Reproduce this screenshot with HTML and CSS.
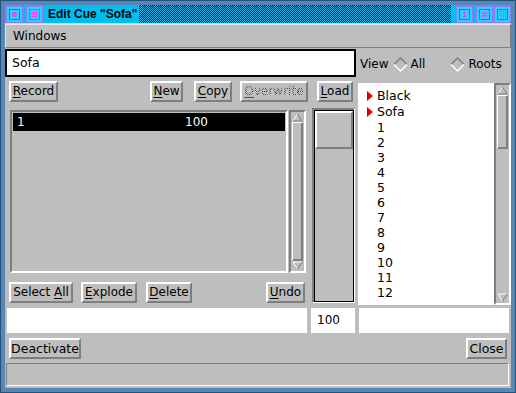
FILE: index.html
```html
<!DOCTYPE html>
<html lang="en">
<head>
  <meta charset="UTF-8">
  <title>Edit Cue "Sofa"</title>
  <link rel="stylesheet" href="styles.css">
</head>
<body>
  <div class="window">
    <div class="titlebar">
      <span class="tbtn">
        <svg width="17" height="17" viewBox="0 0 17 17">
          <rect x="0" y="0" width="17" height="17" fill="#8c7cff"/>
          <rect x="1" y="1" width="15" height="15" fill="#2cd2ff"/>
          <rect x="3.5" y="3.5" width="10" height="10" fill="#2cd2ff" stroke="#6a4cf0"/>
          <rect x="6" y="7" width="5" height="3" fill="#ff3cf0"/>
          <rect x="7" y="6" width="3" height="5" fill="#ff3cf0"/>
        </svg>
      </span>
      <span class="tbtn">
        <svg width="17" height="17" viewBox="0 0 17 17">
          <rect x="0" y="0" width="17" height="17" fill="#8c7cff"/>
          <rect x="1" y="1" width="15" height="15" fill="#2cd2ff"/>
          <rect x="3.5" y="3.5" width="10" height="10" fill="#2cd2ff" stroke="#b04cf0"/>
          <path d="M5 6.5h7M5 8.5h7M5 10.5h7" stroke="#ff3cf0" stroke-width="1"/>
        </svg>
      </span>
      <span class="title">Edit Cue "Sofa"</span>
      <span class="stipple"></span>
      <span class="tbtn">
        <svg width="17" height="17" viewBox="0 0 17 17">
          <rect x="0" y="0" width="17" height="17" fill="#8c7cff"/>
          <rect x="1" y="1" width="15" height="15" fill="#2cd2ff"/>
          <rect x="3.5" y="3.5" width="10" height="10" fill="#2cd2ff" stroke="#6a4cf0"/>
          <path d="M8.5 5l-2 2h4zM8.5 12l-2-2h4zM8 7h1v3h-1z" fill="#ff3cf0"/>
        </svg>
      </span>
      <span class="tbtn gap3">
        <svg width="17" height="17" viewBox="0 0 17 17">
          <rect x="0" y="0" width="17" height="17" fill="#8c7cff"/>
          <rect x="1" y="1" width="15" height="15" fill="#2cd2ff"/>
          <rect x="3.5" y="3.5" width="10" height="10" fill="#2cd2ff" stroke="#6a4cf0"/>
          <path d="M6 6h2v2h-2zM9 6h2v2h-2zM7.5 7.5h2v2h-2zM6 9h2v2h-2zM9 9h2v2h-2z" fill="#ff3cf0"/>
        </svg>
      </span>
      <span class="tbtn gap2">
        <svg width="17" height="17" viewBox="0 0 17 17">
          <rect x="0" y="0" width="17" height="17" fill="#8c7cff"/>
          <rect x="1" y="1" width="15" height="15" fill="#2cd2ff"/>
          <rect x="3.5" y="3.5" width="10" height="10" fill="#2cd2ff" stroke="#6a4cf0"/>
          <path d="M5 5.5h6.5v6.5M5 7.5h4.5v4.5M5 9.5h2.5v2.5" fill="none" stroke="#ff3cf0" stroke-width="1"/>
        </svg>
      </span>
    </div>

    <div class="client">
      <div class="menubar"><span class="menu">Windows</span></div>

      <div class="row-name">
        <div class="entry">Sofa</div>
        <span class="view-label">View</span>
        <span class="radio">
          <svg width="15" height="15" viewBox="0 0 15 15">
            <path d="M1 7.5L7.5 1L14 7.5" fill="none" stroke="#7e7e7e" stroke-width="1.5"/>
            <path d="M14 7.5L7.5 14L1 7.5" fill="none" stroke="#fff" stroke-width="1.5"/>
          </svg>
          All
        </span>
        <span class="radio roots">
          <svg width="15" height="15" viewBox="0 0 15 15">
            <path d="M1 7.5L7.5 1L14 7.5" fill="none" stroke="#7e7e7e" stroke-width="1.5"/>
            <path d="M14 7.5L7.5 14L1 7.5" fill="none" stroke="#fff" stroke-width="1.5"/>
          </svg>
          Roots
        </span>
      </div>

      <div class="row-main">
        <div class="left-col">
          <div class="btnrow btnrow-top">
            <button class="btn b-record"><u>R</u>ecord</button>
            <button class="btn b-new"><u>N</u>ew</button>
            <button class="btn b-copy"><u>C</u>opy</button>
            <button class="btn b-over" disabled><span class="stippled"><u>O</u>verwrite</span></button>
            <button class="btn b-load"><u>L</u>oad</button>
          </div>
          <div class="lower">
            <div class="listblock">
              <div class="listwrap">
                <div class="list">
                  <div class="item selected"><span class="c1">1</span><span>100</span></div>
                </div>
                <div class="vscroll">
                  <svg class="arrow" width="11" height="9" viewBox="0 0 11 9">
                    <path d="M5.5 1L10 8H1z" fill="#bebebe"/>
                    <path d="M1 8L5.5 1" stroke="#fff"/>
                    <path d="M5.5 1L10 8H1" fill="none" stroke="#7e7e7e"/>
                  </svg>
                  <div class="thumb full"></div>
                  <svg class="arrow" width="11" height="9" viewBox="0 0 11 9">
                    <path d="M1 1h9L5.5 8z" fill="#bebebe"/>
                    <path d="M1 1h9M1 1l4.5 7" fill="none" stroke="#fff"/>
                    <path d="M10 1L5.5 8" stroke="#7e7e7e"/>
                  </svg>
                </div>
              </div>
              <div class="btnrow btnrow-bottom">
                <button class="btn b-selall">Select <u>A</u>ll</button>
                <button class="btn b-explode"><u>E</u>xplode</button>
                <button class="btn b-delete"><u>D</u>elete</button>
                <button class="btn b-undo"><u>U</u>ndo</button>
              </div>
            </div>
            <div class="slider"><div class="slider-thumb"></div></div>
          </div>
        </div>

        <div class="tree">
          <div class="tree-list">
            <div class="node"><span class="tri"></span>Black</div>
            <div class="node"><span class="tri"></span>Sofa</div>
            <div class="leaf">1</div>
            <div class="leaf">2</div>
            <div class="leaf">3</div>
            <div class="leaf">4</div>
            <div class="leaf">5</div>
            <div class="leaf">6</div>
            <div class="leaf">7</div>
            <div class="leaf">8</div>
            <div class="leaf">9</div>
            <div class="leaf">10</div>
            <div class="leaf">11</div>
            <div class="leaf">12</div>
          </div>
          <div class="vscroll">
            <svg class="arrow" width="11" height="9" viewBox="0 0 11 9">
              <path d="M5.5 1L10 8H1z" fill="#bebebe"/>
              <path d="M1 8L5.5 1" stroke="#fff"/>
              <path d="M5.5 1L10 8H1" fill="none" stroke="#7e7e7e"/>
            </svg>
            <div class="thumb part"></div>
            <div class="trough"></div>
            <svg class="arrow" width="11" height="9" viewBox="0 0 11 9">
              <path d="M1 1h9L5.5 8z" fill="#bebebe"/>
              <path d="M1 1h9M1 1l4.5 7" fill="none" stroke="#fff"/>
              <path d="M10 1L5.5 8" stroke="#7e7e7e"/>
            </svg>
          </div>
        </div>
      </div>

      <div class="row-fields">
        <div class="field f-left"></div>
        <div class="field f-mid">100</div>
        <div class="field f-right"></div>
      </div>

      <div class="row-actions">
        <button class="btn b-deact">Deactivate</button>
        <button class="btn b-close">Close</button>
      </div>

      <div class="status"></div>
    </div>
  </div>
</body>
</html>
```

FILE: styles.css
```css
body {
  margin: 0;
  overflow: hidden;
  font-family: "DejaVu Sans", sans-serif;
  font-size: 12px;
  color: #000;
}
.window {
  width: 516px;
  height: 393px;
  box-sizing: border-box;
  background-color: #5687b6;
  border: 1px solid #26517b;
  padding: 4px;
  display: flex;
  flex-direction: column;
}
.titlebar {
  height: 18px;
  background-color: #00bef0;
  border-bottom: 1px solid #a4e6f8;
  display: flex;
  align-items: flex-start;
}
.tbtn {
  display: block;
  width: 17px;
  height: 17px;
  margin-top: 1px;
  margin-left: 1px;
}
.tbtn + .tbtn {
  margin-left: 3px;
}
.tbtn.gap2 {
  margin-left: 1px;
}
.tbtn svg {
  display: block;
}
.title {
  font-family: "Liberation Sans", sans-serif;
  font-weight: bold;
  font-size: 12px;
  line-height: 18px;
  margin-left: 5px;
  white-space: nowrap;
}
.stipple {
  flex: 1;
  height: 18px;
  margin-left: 2px;
  margin-right: 4px;
  background: repeating-conic-gradient(#000 0 25%, #00bef0 0 50%) 0 0 / 2px 2px;
}
.client {
  flex: 1;
  background-color: #bebebe;
  display: flex;
  flex-direction: column;
}
.menubar {
  height: 24px;
  box-sizing: border-box;
  border-top: 1px solid #e8e8e8;
  border-left: 1px solid #e8e8e8;
  border-bottom: 1px solid #7e7e7e;
  border-right: 1px solid #7e7e7e;
  display: flex;
  align-items: center;
}
.menu {
  margin-left: 7px;
}
.row-name {
  margin-top: 1px;
  height: 28px;
  display: flex;
  align-items: center;
}
.entry {
  width: 351px;
  height: 28px;
  box-sizing: border-box;
  border: 2px solid #000;
  background: #fff;
  padding-left: 5px;
  line-height: 24px;
  font-size: 12.5px;
}
.view-label {
  margin-left: 4px;
  margin-top: 2px;
}
.radio {
  display: flex;
  align-items: center;
  gap: 2px;
  margin-left: 5px;
  margin-top: 2px;
}
.radio svg {
  display: block;
}
.radio.roots {
  margin-left: 25px;
  gap: 3px;
}
.row-main {
  margin-top: 3px;
  height: 226px;
  display: flex;
}
.left-col {
  width: 353px;
}
.btnrow {
  height: 21px;
  display: flex;
}
.btnrow-top {
  margin-top: 1px;
  padding-left: 4px;
}
.btn {
  font-family: inherit;
  font-size: 12px;
  color: #000;
  height: 21px;
  box-sizing: border-box;
  padding: 0;
  line-height: 17px;
  text-align: center;
  background-color: #bebebe;
  border: 2px solid;
  border-color: #fff #7e7e7e #7e7e7e #fff;
  white-space: nowrap;
}
.btn u {
  text-underline-offset: 2px;
}
.b-record { width: 49px; }
.b-new { width: 33px; margin-left: 92px; }
.b-copy { width: 38px; margin-left: 11px; }
.b-over { width: 68px; margin-left: 8px; }
.b-load { width: 36px; margin-left: 9px; }
.stippled {
  color: transparent;
  background: repeating-conic-gradient(#333 0 25%, transparent 0 50%) 0 0 / 2px 2px;
  -webkit-background-clip: text;
  background-clip: text;
}
.stippled u {
  text-decoration-color: #555;
}
.lower {
  margin-top: 6px;
  height: 196px;
  display: flex;
}
.listblock {
  width: 298px;
  margin-left: 4px;
  display: flex;
  flex-direction: column;
}
.listwrap {
  margin-top: 2px;
  height: 163px;
  display: flex;
}
.list {
  width: 278px;
  margin-left: 1px;
  box-sizing: border-box;
  border: 2px solid;
  border-color: #7e7e7e #fff #fff #7e7e7e;
  padding: 1px;
}
.item {
  height: 18px;
  line-height: 18px;
  padding-left: 4px;
  display: flex;
}
.item.selected {
  background: #000;
  color: #fff;
}
.c1 {
  width: 168px;
}
.vscroll {
  width: 17px;
  margin-left: 1px;
  box-sizing: border-box;
  border: 2px solid;
  border-color: #7e7e7e #fff #fff #7e7e7e;
  padding: 1px 0;
  display: flex;
  flex-direction: column;
  align-items: center;
}
.arrow {
  display: block;
  flex: none;
}
.thumb {
  width: 11px;
  box-sizing: border-box;
  border: 1px solid;
  border-color: #fff #7e7e7e #7e7e7e #fff;
  box-shadow: inset -1px -1px 0 #7e7e7e;
}
.thumb.full {
  flex: 1;
}
.thumb.part {
  height: 54px;
  flex: none;
}
.trough {
  flex: 1;
}
.btnrow-bottom {
  margin-top: 9px;
}
.b-selall { width: 64px; }
.b-explode { width: 56px; margin-left: 8px; }
.b-delete { width: 46px; margin-left: 9px; }
.b-undo { width: 39px; margin-left: auto; margin-right: 2px; }
.slider {
  margin-left: 5px;
  width: 43px;
  height: 195px;
  box-sizing: border-box;
  border: 1px solid;
  border-color: #7e7e7e #fff #fff #7e7e7e;
  box-shadow: inset 1px 1px 0 #7e7e7e;
  padding: 1px 0 0 1px;
}
.slider-thumb {
  height: 100%;
  box-sizing: border-box;
  border: 1px solid #000;
}
.slider-thumb::before {
  content: "";
  display: block;
  height: 38px;
  box-sizing: border-box;
  border: 2px solid;
  border-color: #fff #7e7e7e #7e7e7e #fff;
}
.tree {
  margin-top: 3px;
  height: 222px;
  flex: 1;
  display: flex;
}
.tree-list {
  flex: 1;
  background: #fff;
  padding-top: 5px;
}
.tree .vscroll {
  margin-left: 0;
}
.node {
  height: 16px;
  line-height: 16px;
  display: flex;
  align-items: center;
  padding-left: 9px;
  font-size: 12.5px;
}
.tri {
  width: 0;
  height: 0;
  border-top: 5px solid transparent;
  border-bottom: 5px solid transparent;
  border-left: 6px solid #e00000;
  margin-right: 4px;
}
.leaf {
  height: 15px;
  line-height: 15px;
  padding-left: 19px;
  font-size: 12.5px;
}
.row-fields {
  margin-top: 2px;
  height: 25px;
  display: flex;
}
.field {
  background: #fff;
  line-height: 25px;
}
.f-left { width: 300px; margin-left: 2px; }
.f-mid { width: 44px; margin-left: 4px; padding-left: 6px; box-sizing: border-box; }
.f-right { width: 150px; margin-left: 4px; }
.row-actions {
  margin-top: 5px;
  height: 21px;
  display: flex;
}
.b-deact { width: 72px; margin-left: 4px; font-size: 12.5px; }
.b-close { width: 41px; margin-left: auto; margin-right: 4px; font-size: 12.5px; }
.status {
  margin: 4px 2px 0 1px;
  height: 23px;
  box-sizing: border-box;
  border: 1px solid;
  border-color: #7e7e7e #fff #fff #7e7e7e;
}
```
